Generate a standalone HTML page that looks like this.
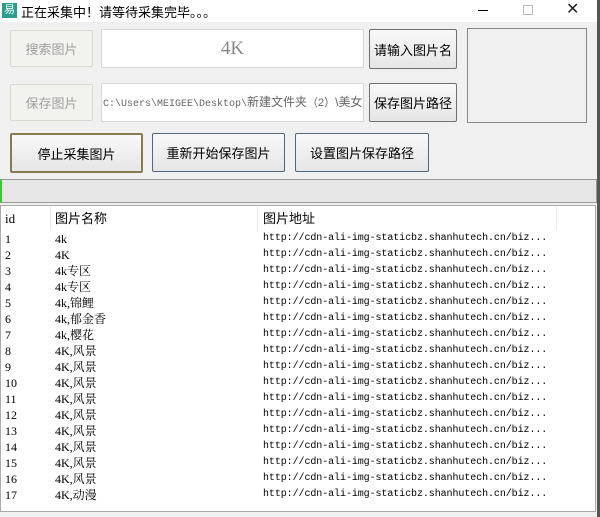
<!DOCTYPE html>
<html><head><meta charset="utf-8"><style>
*{box-sizing:border-box;margin:0;padding:0}
body{width:600px;height:517px;background:#f0f0f0;position:relative;overflow:hidden;font-family:"Liberation Sans","Noto Sans CJK SC",sans-serif;font-size:13px;color:#000}
.a{position:absolute}
.btn{position:absolute;border:1px solid #707070;background:linear-gradient(#f8f8f8,#e6e6e6);display:flex;align-items:center;justify-content:center;font-size:13px;border-radius:2px}
.dis{border:1px solid #d8d8d0;background:#f2f2ef;color:#a0a0a0}
.tb{position:absolute;background:#fff;border:1px solid #d8d8d8}
.row{position:absolute;left:0;height:16px;font-family:"Liberation Serif","Noto Serif CJK SC",serif;font-size:12px;line-height:16px;white-space:nowrap}
.row span{position:absolute}
.u{font-family:"Liberation Mono",monospace;font-size:10px;letter-spacing:-0.08px}
</style></head><body>
<div class="a" style="left:0;top:0;width:600px;height:22px;background:#fff"></div>
<div class="a" style="left:2px;top:3px;width:15px;height:15px;background:#2a9d8f;color:#fff;font-size:11px;line-height:15px;text-align:center">易</div>
<div class="a" style="left:21px;top:2px;font-size:13px">正在采集中！请等待采集完毕。。。</div>
<div class="a" style="left:478px;top:10px;width:10px;height:1px;background:#000"></div>
<div class="a" style="left:523px;top:5px;width:10px;height:10px;border:1px solid #bbb"></div>
<div class="a" style="left:566px;top:0px;font-size:16px;line-height:20px;color:#222">✕</div>
<div class="a" style="left:597px;top:0;width:3px;height:517px;background:#555"></div>

<div class="btn dis" style="left:10px;top:30px;width:83px;height:37px">搜索图片</div>
<div class="tb" style="left:101px;top:29px;width:263px;height:39px;text-align:center;font-family:'Liberation Serif',serif;font-size:19px;line-height:37px;color:#888">4K</div>
<div class="btn" style="left:369px;top:29px;width:88px;height:40px">请输入图片名</div>
<div class="a" style="left:467px;top:28px;width:120px;height:95px;border:1px solid #888;background:#f0f0f0"></div>

<div class="btn dis" style="left:10px;top:84px;width:83px;height:37px">保存图片</div>
<div class="tb" style="left:101px;top:83px;width:263px;height:39px;font-size:12px;line-height:37px;color:#666;padding-left:1px;white-space:nowrap;overflow:hidden"><span style="font-family:'Liberation Mono',monospace;font-size:10px;letter-spacing:0px">C:\Users\MEIGEE\Desktop\</span>新建文件夹<span style="font-size:11px">（2）</span>\美女</div>
<div class="btn" style="left:369px;top:83px;width:88px;height:39px">保存图片路径</div>

<div class="btn" style="left:10px;top:133px;width:133px;height:40px;border:2px solid #8a7a50">停止采集图片</div>
<div class="btn" style="left:152px;top:133px;width:133px;height:39px;border-color:#506880">重新开始保存图片</div>
<div class="btn" style="left:295px;top:133px;width:134px;height:39px;border-color:#506880">设置图片保存路径</div>

<div class="a" style="left:0;top:179px;width:597px;height:24px;border:1px solid #999;border-left:2px solid #3c3;background:#e6e6e6"></div>

<div class="a" style="left:0;top:205px;width:596px;height:307px;background:#fff;border:1px solid #aaa"></div>
<div class="a" style="left:50px;top:207px;width:1px;height:24px;background:#e8e8e8"></div>
<div class="a" style="left:257px;top:207px;width:1px;height:24px;background:#e8e8e8"></div>
<div class="a" style="left:556px;top:207px;width:1px;height:24px;background:#e8e8e8"></div>
<div class="row" style="top:211px;font-size:13px"><span style="left:5px">id</span><span style="left:55px;font-family:'Liberation Sans','Noto Sans CJK SC',sans-serif">图片名称</span><span style="left:263px;font-family:'Liberation Sans','Noto Sans CJK SC',sans-serif">图片地址</span></div>
<div id="rows"></div>
<script>
var n=["4k","4K","4k专区","4k专区","4k,锦鲤","4k,郁金香","4k,樱花","4K,风景","4K,风景","4K,风景","4K,风景","4K,风景","4K,风景","4K,风景","4K,风景","4K,风景","4K,动漫"];
var h="";for(var i=0;i<17;i++){h+='<div class="row" style="top:'+(231+i*16)+'px"><span style="left:5px">'+(i+1)+'</span><span style="left:55px">'+n[i]+'</span><span class="u" style="left:263px">http://cdn-ali-img-staticbz.shanhutech.cn/biz...</span></div>';}
document.getElementById("rows").innerHTML=h;
</script>
</body></html>
